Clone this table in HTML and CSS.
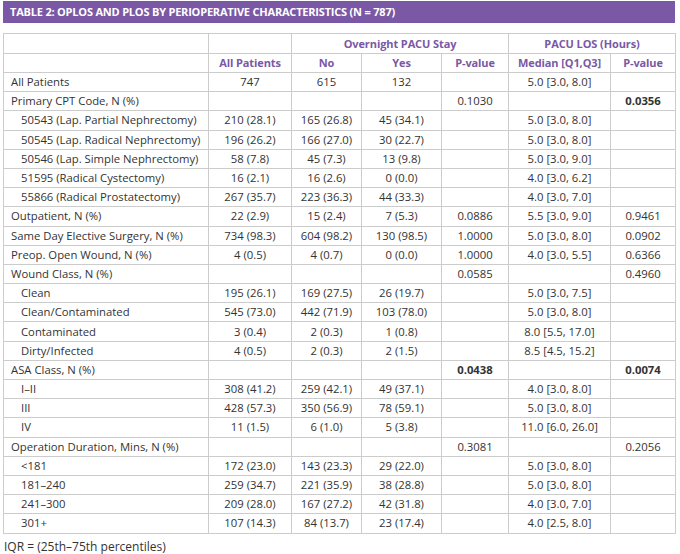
FILE: index.html
```html
<!DOCTYPE html>
<html>
<head>
<meta charset="utf-8">
<link rel="stylesheet" href="styles.css">
</head>
<body>
<div class="page">
  <div class="title">TABLE 2: OPLOS AND PLOS BY PERIOPERATIVE CHARACTERISTICS (N = 787)</div>
  <table class="data">
    <colgroup>
      <col class="c1"><col class="c2"><col class="c3"><col class="c4"><col class="c5"><col class="c6"><col class="c7">
    </colgroup>
    <thead>
      <tr class="h1">
        <th></th><th></th>
        <th colspan="3">Overnight PACU Stay</th>
        <th colspan="2">PACU LOS (Hours)</th>
      </tr>
      <tr class="h2">
        <th></th><th>All Patients</th><th>No</th><th>Yes</th><th>P-value</th><th>Median [Q1,Q3]</th><th>P-value</th>
      </tr>
    </thead>
    <tbody>
      <tr><td>All Patients</td><td>747</td><td>615</td><td>132</td><td></td><td>5.0 [3.0, 8.0]</td><td></td></tr>
      <tr><td>Primary CPT Code, N (%)</td><td></td><td></td><td></td><td>0.1030</td><td></td><td class="b">0.0356</td></tr>
      <tr><td class="in">50543 (Lap. Partial Nephrectomy)</td><td>210 (28.1)</td><td>165 (26.8)</td><td>45 (34.1)</td><td></td><td>5.0 [3.0, 8.0]</td><td></td></tr>
      <tr><td class="in">50545 (Lap. Radical Nephrectomy)</td><td>196 (26.2)</td><td>166 (27.0)</td><td>30 (22.7)</td><td></td><td>5.0 [3.0, 8.0]</td><td></td></tr>
      <tr><td class="in">50546 (Lap. Simple Nephrectomy)</td><td>58 (7.8)</td><td>45 (7.3)</td><td>13 (9.8)</td><td></td><td>5.0 [3.0, 9.0]</td><td></td></tr>
      <tr><td class="in">51595 (Radical Cystectomy)</td><td>16 (2.1)</td><td>16 (2.6)</td><td>0 (0.0)</td><td></td><td>4.0 [3.0, 6.2]</td><td></td></tr>
      <tr><td class="in">55866 (Radical Prostatectomy)</td><td>267 (35.7)</td><td>223 (36.3)</td><td>44 (33.3)</td><td></td><td>4.0 [3.0, 7.0]</td><td></td></tr>
      <tr><td>Outpatient, N (%)</td><td>22 (2.9)</td><td>15 (2.4)</td><td>7 (5.3)</td><td>0.0886</td><td>5.5 [3.0, 9.0]</td><td>0.9461</td></tr>
      <tr><td>Same Day Elective Surgery, N (%)</td><td>734 (98.3)</td><td>604 (98.2)</td><td>130 (98.5)</td><td>1.0000</td><td>5.0 [3.0, 8.0]</td><td>0.0902</td></tr>
      <tr><td>Preop. Open Wound, N (%)</td><td>4 (0.5)</td><td>4 (0.7)</td><td>0 (0.0)</td><td>1.0000</td><td>4.0 [3.0, 5.5]</td><td>0.6366</td></tr>
      <tr><td>Wound Class, N (%)</td><td></td><td></td><td></td><td>0.0585</td><td></td><td>0.4960</td></tr>
      <tr><td class="in">Clean</td><td>195 (26.1)</td><td>169 (27.5)</td><td>26 (19.7)</td><td></td><td>5.0 [3.0, 7.5]</td><td></td></tr>
      <tr><td class="in">Clean/Contaminated</td><td>545 (73.0)</td><td>442 (71.9)</td><td>103 (78.0)</td><td></td><td>5.0 [3.0, 8.0]</td><td></td></tr>
      <tr><td class="in">Contaminated</td><td>3 (0.4)</td><td>2 (0.3)</td><td>1 (0.8)</td><td></td><td>8.0 [5.5, 17.0]</td><td></td></tr>
      <tr><td class="in">Dirty/Infected</td><td>4 (0.5)</td><td>2 (0.3)</td><td>2 (1.5)</td><td></td><td>8.5 [4.5, 15.2]</td><td></td></tr>
      <tr><td>ASA Class, N (%)</td><td></td><td></td><td></td><td class="b">0.0438</td><td></td><td class="b">0.0074</td></tr>
      <tr><td class="in">I–II</td><td>308 (41.2)</td><td>259 (42.1)</td><td>49 (37.1)</td><td></td><td>4.0 [3.0, 8.0]</td><td></td></tr>
      <tr><td class="in">III</td><td>428 (57.3)</td><td>350 (56.9)</td><td>78 (59.1)</td><td></td><td>5.0 [3.0, 8.0]</td><td></td></tr>
      <tr><td class="in">IV</td><td>11 (1.5)</td><td>6 (1.0)</td><td>5 (3.8)</td><td></td><td>11.0 [6.0, 26.0]</td><td></td></tr>
      <tr><td>Operation Duration, Mins, N (%)</td><td></td><td></td><td></td><td>0.3081</td><td></td><td>0.2056</td></tr>
      <tr><td class="in">&lt;181</td><td>172 (23.0)</td><td>143 (23.3)</td><td>29 (22.0)</td><td></td><td>5.0 [3.0, 8.0]</td><td></td></tr>
      <tr><td class="in">181–240</td><td>259 (34.7)</td><td>221 (35.9)</td><td>38 (28.8)</td><td></td><td>5.0 [3.0, 8.0]</td><td></td></tr>
      <tr><td class="in">241–300</td><td>209 (28.0)</td><td>167 (27.2)</td><td>42 (31.8)</td><td></td><td>4.0 [3.0, 7.0]</td><td></td></tr>
      <tr><td class="in">301+</td><td>107 (14.3)</td><td>84 (13.7)</td><td>23 (17.4)</td><td></td><td>4.0 [2.5, 8.0]</td><td></td></tr>
    </tbody>
  </table>
  <div class="note">IQR = (25th–75th percentiles)</div>
</div>
</body>
</html>
```
FILE: styles.css
```css
html, body {
  margin: 0;
  padding: 0;
  background: #ffffff;
}
body {
  font-family: "Open Sans", "Noto Sans", sans-serif;
  color: #333333;
  font-size: 11.3px;
}
.page {
  width: 672px;
  padding: 1px 0 0 3px;
}
.title {
  background: #7a58a5;
  color: #ffffff;
  font-weight: 700;
  font-size: 11px;
  height: 22px;
  line-height: 22px;
  padding-left: 7px;
  letter-spacing: -0.2px;
}
.data {
  margin-top: 10px;
  width: 672px;
  border-collapse: collapse;
  table-layout: fixed;
}
.c1 { width: 205px; }
.c2 { width: 83px; }
.c3 { width: 70px; }
.c4 { width: 80px; }
.c5 { width: 67px; }
.c6 { width: 102px; }
.c7 { width: 65px; }
.data th, .data td {
  border: 1px solid #cccccc;
  padding: 0;
  text-align: center;
  white-space: nowrap;
  line-height: 14px;
}
.data th {
  color: #7a58a5;
  font-weight: 700;
  font-size: 11px;
  letter-spacing: -0.1px;
}
.h1 th { height: 19px; }
.h2 th { height: 18px; }
.data td { height: 18.2px; }
.data td:first-child {
  text-align: left;
  padding-left: 7px;
}
.data td.in { padding-left: 17px; }
.data td.b { font-weight: 700; }
.note {
  padding: 4px 0 0 1px;
  font-size: 12px;
}
```
